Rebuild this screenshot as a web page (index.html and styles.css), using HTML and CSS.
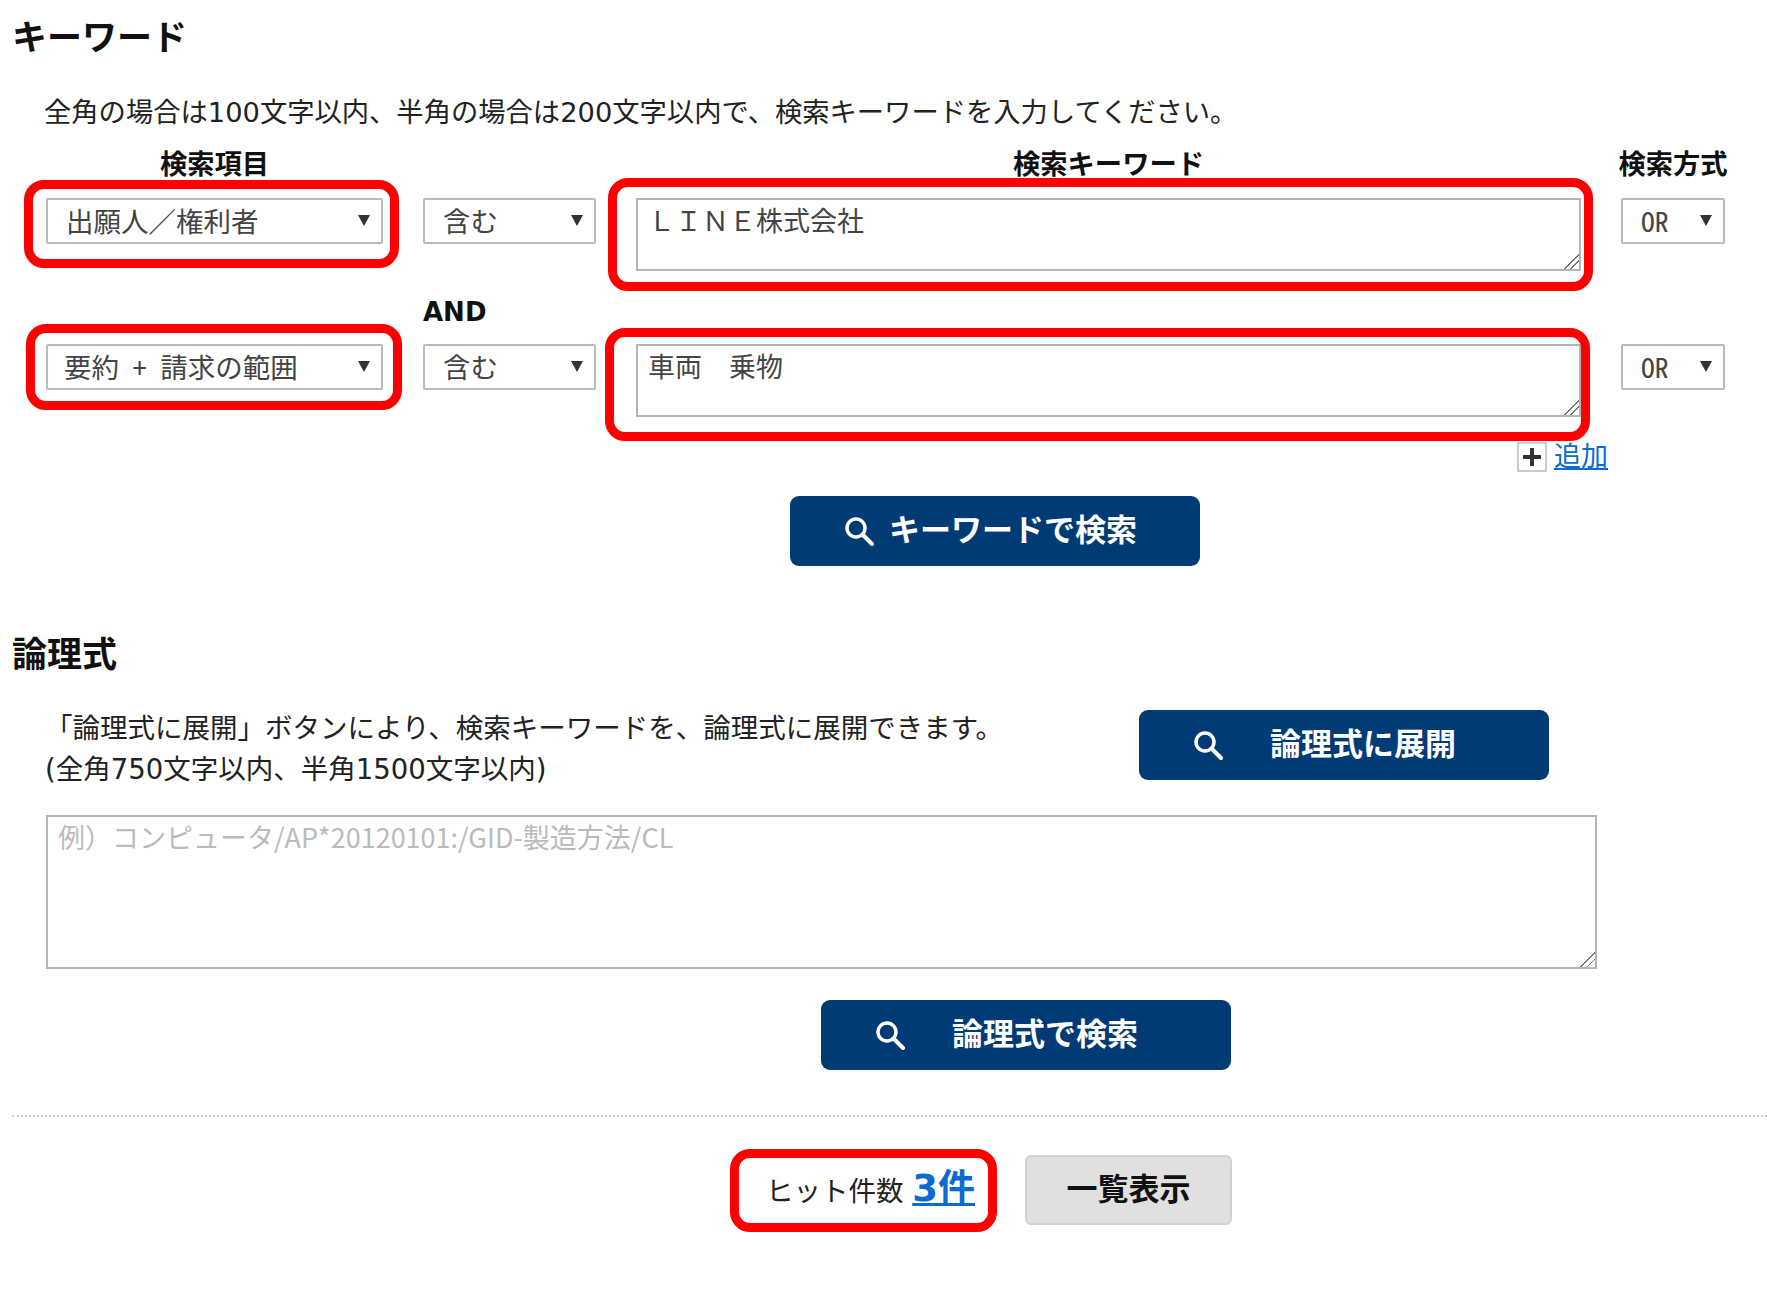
FILE: index.html
```html
<!DOCTYPE html>
<html lang="ja">
<head>
    <meta charset="UTF-8">
    <meta name="viewport" content="width=device-width, initial-scale=1.0">
    <title>キーワード検索</title>
    <link rel="stylesheet" href="styles.css">
</head>
<body>

    <!-- Keyword section -->
    <h2 class="section-title">キーワード</h2>
    <p class="desc">全角の場合は100文字以内、半角の場合は200文字以内で、検索キーワードを入力してください。</p>

    <div class="keyword-grid">
        <div class="col-label">検索項目</div>
        <div class="col-label"></div>
        <div class="col-label">検索キーワード</div>
        <div class="col-label">検索方式</div>

        <div class="field sel">
            <select class="sel-item"><option>出願人／権利者</option></select>
            <span class="frame frame-a"></span>
        </div>
        <div class="field sel">
            <select class="sel-item"><option>含む</option></select>
        </div>
        <div class="field">
            <textarea class="kw-input">ＬＩＮＥ株式会社</textarea>
            <span class="frame frame-b"></span>
        </div>
        <div class="field sel">
            <select class="sel-item sel-half"><option>OR</option></select>
        </div>

        <div></div>
        <div class="and-label">AND</div>
        <div></div>
        <div></div>

        <div class="field sel">
            <select class="sel-item sel-half sel-tight"><option>要約 + 請求の範囲</option></select>
            <span class="frame frame-c"></span>
        </div>
        <div class="field sel">
            <select class="sel-item"><option>含む</option></select>
        </div>
        <div class="field">
            <textarea class="kw-input">車両　乗物</textarea>
            <span class="frame frame-d"></span>
        </div>
        <div class="field sel">
            <select class="sel-item sel-half"><option>OR</option></select>
        </div>
    </div>

    <div class="add-row">
        <span class="add-box">
            <svg width="22" height="22" viewBox="0 0 22 22"><path d="M11 2v18M2 11h18" stroke="#333" stroke-width="4" fill="none"/></svg>
        </span>
        <a href="#" class="add-link">追加</a>
    </div>

    <div class="btn-row btn-row-kw">
        <button class="btn">
            <svg class="search-icon" viewBox="0 0 30 30"><circle cx="12" cy="12" r="9" fill="none" stroke="#fff" stroke-width="3.5"/><path d="M18.5 18.5L28 28" stroke="#fff" stroke-width="4" stroke-linecap="round"/></svg>
            <span class="btn-label">キーワードで検索</span>
        </button>
    </div>

    <!-- Logic expression section -->
    <h2 class="section-title section-logic">論理式</h2>
    <div class="logic-head">
        <p class="logic-text">「論理式に展開」ボタンにより、検索キーワードを、論理式に展開できます。<br>(全角750文字以内、半角1500文字以内)</p>
        <button class="btn btn-wide">
            <svg class="search-icon" viewBox="0 0 30 30"><circle cx="12" cy="12" r="9" fill="none" stroke="#fff" stroke-width="3.5"/><path d="M18.5 18.5L28 28" stroke="#fff" stroke-width="4" stroke-linecap="round"/></svg>
            <span class="btn-label">論理式に展開</span>
        </button>
    </div>
    <textarea class="logic-input" placeholder="例）コンピュータ/AP*20120101:/GID-製造方法/CL"></textarea>

    <div class="btn-row btn-row-logic">
        <button class="btn btn-wide">
            <svg class="search-icon" viewBox="0 0 30 30"><circle cx="12" cy="12" r="9" fill="none" stroke="#fff" stroke-width="3.5"/><path d="M18.5 18.5L28 28" stroke="#fff" stroke-width="4" stroke-linecap="round"/></svg>
            <span class="btn-label">論理式で検索</span>
        </button>
    </div>

    <hr class="divider">

    <!-- Hit count -->
    <div class="hit-row">
        <div class="hit">
            ヒット件数 <a href="#" class="hit-count">3件</a>
            <span class="frame frame-e"></span>
        </div>
        <button class="btn-list"><span class="btn-label">一覧表示</span></button>
    </div>

</body>
</html>
```

FILE: styles.css
```css
body {
    font-family: "DejaVu Sans", "Noto Sans CJK JP", sans-serif;
    margin: 0;
    padding: 0;
    background-color: #fff;
    color: #222;
    overflow-x: hidden;
}
.section-title {
    margin: 14px 0 0 12px;
    font-size: 35px;
    line-height: 48px;
    font-weight: bold;
    color: #111;
}
.desc {
    margin: 31px 0 0 44px;
    font-size: 27.3px;
    line-height: 40px;
    white-space: nowrap;
}

/* Keyword rows */
.keyword-grid {
    display: grid;
    grid-template-columns: 337px 173px 945px 104px;
    grid-template-rows: 51px 73px 73px 73px;
    column-gap: 40px;
    margin: 14px 0 0 46px;
}
.col-label {
    justify-self: center;
    margin-top: 1px;
    font-size: 27.3px;
    line-height: 34px;
    font-weight: bold;
    white-space: nowrap;
    color: #111;
}
.field {
    position: relative;
}
.sel {
    height: 46px;
}
.sel::after {
    content: "";
    position: absolute;
    right: 13px;
    top: 17px;
    border-left: 6px solid transparent;
    border-right: 6px solid transparent;
    border-top: 11px solid #333;
}
.sel-item {
    appearance: none;
    width: 100%;
    height: 46px;
    padding: 0 0 4px 18px;
    font-family: "Noto Sans CJK JP", sans-serif;
    font-size: 27.5px;
    color: #444;
    background: #fff;
    border: 2px solid #bbb;
    border-radius: 2px;
}
.sel-half {
    font-feature-settings: "hwid";
}
.sel-tight {
    padding-left: 16px;
}
.kw-input {
    display: block;
    box-sizing: border-box;
    width: 100%;
    height: 73px;
    padding: 1px 10px 0;
    font-family: "Noto Sans CJK JP", sans-serif;
    font-size: 27px;
    line-height: 38px;
    color: #444;
    border: 2px solid #b5b5b5;
    outline: none;
}
.kw-input::-webkit-resizer,
.logic-input::-webkit-resizer {
    background: linear-gradient(135deg, transparent 48%, #777 48% 54%, transparent 54% 70%, #777 70% 76%, transparent 76%);
}
.and-label {
    align-self: end;
    padding-bottom: 14px;
    font-size: 26px;
    line-height: 36px;
    font-weight: bold;
    color: #111;
}

/* Red annotation frames */
.frame {
    position: absolute;
    box-sizing: border-box;
    border: 9px solid #f00;
    border-radius: 20px;
    pointer-events: none;
}
.frame-a { left: -22px; right: -16px; top: -18px; bottom: -24px; }
.frame-b { left: -28px; right: -12px; top: -20px; bottom: -20px; }
.frame-c { left: -20px; right: -19px; top: -20px; bottom: -20px; }
.frame-d { left: -31px; right: -9px; top: -16px; bottom: -24px; }
.frame-e { left: -36px; right: -22px; top: -11px; bottom: -12px; }

.add-row {
    display: flex;
    justify-content: flex-end;
    align-items: center;
    gap: 7px;
    width: 1608px;
    height: 30px;
    margin-top: 25px;
}
.add-box {
    display: flex;
    align-items: center;
    justify-content: center;
    box-sizing: border-box;
    width: 30px;
    height: 30px;
    border: 2px solid #ccc;
}
.add-link {
    font-size: 27px;
    line-height: 30px;
    color: #0b6bd0;
}

/* Blue buttons */
.btn {
    display: flex;
    align-items: center;
    gap: 15px;
    box-sizing: border-box;
    width: 410px;
    height: 70px;
    padding: 0 0 0 54px;
    font-family: "Noto Sans CJK JP", sans-serif;
    font-size: 31px;
    font-weight: bold;
    color: #fff;
    background-color: #003b75;
    border: none;
    border-radius: 9px;
    white-space: nowrap;
}
.btn-wide {
    gap: 47px;
}
.btn-label {
    display: block;
    padding-bottom: 7px;
}
.search-icon {
    width: 30px;
    height: 30px;
    flex-shrink: 0;
}
.btn-row-kw {
    margin: 24px 0 0 790px;
}
.section-logic {
    margin-top: 65px;
}
.logic-head {
    display: flex;
    align-items: flex-start;
    margin-top: 29px;
}
.logic-text {
    box-sizing: border-box;
    width: 1139px;
    margin: 0;
    padding-left: 45px;
    font-size: 27.5px;
    line-height: 41px;
    white-space: nowrap;
}
.logic-head .btn {
    margin-top: 2px;
}
.logic-input {
    display: block;
    box-sizing: border-box;
    width: 1551px;
    height: 154px;
    margin: 25px 0 0 46px;
    padding: 1px 10px 0;
    font-family: "Noto Sans CJK JP", sans-serif;
    font-size: 27px;
    line-height: 38px;
    border: 2px solid #b5b5b5;
    outline: none;
}
.logic-input::placeholder {
    color: #bbb;
}
.btn-row-logic {
    margin: 31px 0 0 821px;
}
.divider {
    margin: 45px 0 0 12px;
    border: none;
    border-top: 2px dotted #ccc;
}

/* Hit count row */
.hit-row {
    display: flex;
    justify-content: flex-end;
    align-items: center;
    width: 1232px;
    margin-top: 38px;
    margin-bottom: 60px;
}
.hit {
    position: relative;
    margin-right: 50px;
    font-size: 27.5px;
    line-height: 58px;
    white-space: nowrap;
}
.hit-count {
    font-size: 37px;
    font-weight: bold;
    color: #0b6bd0;
}
.btn-list {
    box-sizing: border-box;
    width: 207px;
    height: 70px;
    font-family: "Noto Sans CJK JP", sans-serif;
    font-size: 31px;
    font-weight: bold;
    color: #111;
    background-color: #e2dfdf;
    border: 2px solid #d3d0d0;
    border-radius: 6px;
}
```
